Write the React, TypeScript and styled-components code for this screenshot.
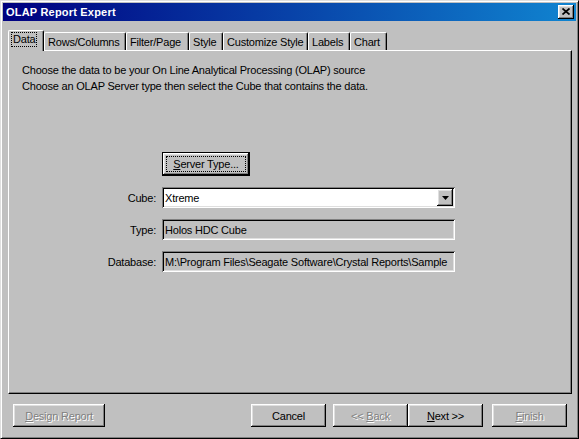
import React from "react";
import styled, { createGlobalStyle } from "styled-components";

const Global = createGlobalStyle`
  html, body { margin: 0; padding: 0; background: #c0c0c0; }
  body { font-family: "Liberation Sans", Arial, sans-serif; font-size: 11px; color: #000; letter-spacing: -0.2px; }
  * { box-sizing: border-box; }
`;

const raised = `
  box-shadow: inset -1px -1px #000, inset 1px 1px #fff, inset -2px -2px #808080, inset 2px 2px #dfdfdf;
`;
const sunken = `
  box-shadow: inset 1px 1px #808080, inset -1px -1px #fff, inset 2px 2px #000, inset -2px -2px #dfdfdf;
`;

const Window = styled.div`
  width: 579px;
  height: 439px;
  background: #c0c0c0;
  border: 1px solid;
  border-color: #dfdfdf #000 #000 #dfdfdf;
  box-shadow: inset 1px 1px #fff, inset -1px -1px #808080;
  padding: 2px;
  display: flex;
  flex-direction: column;
`;

const TitleBar = styled.div`
  height: 18px;
  background: linear-gradient(to right, #000080, #1084d0);
  display: flex;
  align-items: center;
  justify-content: space-between;
  padding: 0 2px 0 3px;
`;

const Title = styled.span`
  color: #fff;
  font-weight: bold;
  font-size: 11px;
  letter-spacing: 0.2px;
`;

const CloseButton = styled.div`
  width: 16px;
  height: 14px;
  background: #c0c0c0;
  ${raised}
  display: flex;
  align-items: center;
  justify-content: center;
  padding-bottom: 1px;
`;

const Body = styled.div`
  flex: 1;
  display: flex;
  flex-direction: column;
  padding: 9px 4px 0 5px;
`;

const TabStrip = styled.div`
  display: flex;
  align-items: flex-end;
  height: 20px;
  position: relative;
  z-index: 1;
`;

const Tab = styled.div<{ $w: number; $active?: boolean }>`
  width: ${(p) => p.$w}px;
  height: ${(p) => (p.$active ? 21 : 18)}px;
  margin-bottom: ${(p) => (p.$active ? -1 : 0)}px;
  background: #c0c0c0;
  border-top: 1px solid #fff;
  border-left: 1px solid #fff;
  border-right: 1px solid #000;
  border-radius: 2px 2px 0 0;
  box-shadow: inset -1px 0 #808080;
  display: flex;
  align-items: ${(p) => (p.$active ? "flex-start" : "center")};
  padding: ${(p) => (p.$active ? "2px 0 0 3px" : "0 0 0 3px")};
  white-space: nowrap;
`;

const FocusLabel = styled.span`
  outline: 1px dotted #000;
  padding: 0 1px;
  line-height: 13px;
`;

const Panel = styled.div`
  flex: 1;
  background: #c0c0c0;
  border-top: 1px solid #fff;
  border-left: 1px solid #fff;
  border-right: 1px solid #000;
  border-bottom: 1px solid #000;
  box-shadow: inset -1px -1px #808080;
  padding: 11px 13px;
`;

const Intro = styled.p`
  margin: 0;
  line-height: 16px;
`;

const Form = styled.div`
  margin-top: 58px;
  display: grid;
  grid-template-columns: 134px 293px;
  column-gap: 6px;
  row-gap: 11px;
  align-items: center;
`;

const Label = styled.span`
  text-align: right;
`;

const Button = styled.div<{ $w: number; $h?: number; $default?: boolean; $disabled?: boolean }>`
  width: ${(p) => p.$w}px;
  height: ${(p) => p.$h ?? 23}px;
  background: #c0c0c0;
  display: flex;
  align-items: center;
  justify-content: center;
  color: ${(p) => (p.$disabled ? "#808080" : "#000")};
  text-shadow: ${(p) => (p.$disabled ? "1px 1px 0 #fff" : "none")};
  ${(p) =>
    p.$default
      ? `border: 1px solid #000; box-shadow: inset -1px -1px #000, inset 1px 1px #fff, inset -2px -2px #808080, inset 2px 2px #dfdfdf;`
      : raised}
  white-space: pre;
`;

const Caption = styled.span`
  white-space: pre;
`;

const FocusRect = styled.span`
  flex: 1;
  align-self: stretch;
  margin: 3px;
  outline: 1px dotted #000;
  outline-offset: -1px;
  display: flex;
  align-items: center;
  justify-content: center;
`;

const Combo = styled.div`
  height: 21px;
  background: #fff;
  ${sunken}
  display: flex;
  align-items: center;
  padding: 2px;
`;

const ComboText = styled.span`
  flex: 1;
  padding-left: 1px;
`;

const DropButton = styled.div`
  width: 16px;
  height: 17px;
  background: #c0c0c0;
  ${raised}
  display: flex;
  align-items: center;
  justify-content: center;
`;

const Field = styled.div`
  height: 21px;
  background: #c0c0c0;
  ${sunken}
  display: flex;
  align-items: center;
  padding: 0 2px 0 3px;
  overflow: hidden;
  white-space: nowrap;
`;

const Footer = styled.div`
  height: 23px;
  margin: 10px 0 9px;
  display: flex;
  align-items: center;
  padding: 0 5px 0 5px;
`;

const Spacer = styled.div`
  flex: 1;
`;

const Gap = styled.div<{ $w: number }>`
  width: ${(p) => p.$w}px;
`;

const U = styled.span`
  text-decoration: underline;
  text-underline-offset: 1px;
`;

const tabs: { label: string; w: number }[] = [
  { label: "Rows/Columns", w: 82 },
  { label: "Filter/Page", w: 63 },
  { label: "Style", w: 34 },
  { label: "Customize Style", w: 85 },
  { label: "Labels", w: 42 },
  { label: "Chart", w: 37 },
];

export default function App() {
  return (
    <>
      <Global />
      <Window>
        <TitleBar>
          <Title>OLAP Report Expert</Title>
          <CloseButton>
            <svg width="8" height="7" viewBox="0 0 8 7">
              <path d="M0.5 0.5 L7.5 6.5 M7.5 0.5 L0.5 6.5" stroke="#000" strokeWidth="1.7" fill="none" />
            </svg>
          </CloseButton>
        </TitleBar>
        <Body>
          <TabStrip>
            <Tab $w={36} $active>
              <FocusLabel>Data</FocusLabel>
            </Tab>
            {tabs.map((t) => (
              <Tab key={t.label} $w={t.w}>
                {t.label}
              </Tab>
            ))}
          </TabStrip>
          <Panel>
            <Intro>
              Choose the data to be your On Line Analytical Processing (OLAP) source
              <br />
              Choose an OLAP Server type then select the Cube that contains the data.
            </Intro>
            <Form>
              <span />
              <Button $w={88} $h={24} $default>
                <FocusRect>
                  <Caption>
                    <U>S</U>erver Type...
                  </Caption>
                </FocusRect>
              </Button>
              <Label>Cube:</Label>
              <Combo>
                <ComboText>Xtreme</ComboText>
                <DropButton>
                  <svg width="7" height="4" viewBox="0 0 7 4">
                    <path d="M0 0 H7 L3.5 4 Z" fill="#000" />
                  </svg>
                </DropButton>
              </Combo>
              <Label>Type:</Label>
              <Field>Holos HDC Cube</Field>
              <Label>Database:</Label>
              <Field>M:\Program Files\Seagate Software\Crystal Reports\Sample</Field>
            </Form>
          </Panel>
          <Footer>
            <Button $w={92} $disabled>
              <Caption>
                <U>D</U>esign Report
              </Caption>
            </Button>
            <Spacer />
            <Button $w={75}>
              <Caption>Cancel</Caption>
            </Button>
            <Gap $w={7} />
            <Button $w={75} $disabled>
              <Caption>
                {"<< "}
                <U>B</U>ack
              </Caption>
            </Button>
            <Button $w={75}>
              <Caption>
                <U>N</U>
                {"ext >>"}
              </Caption>
            </Button>
            <Gap $w={9} />
            <Button $w={75} $disabled>
              <Caption>
                <U>F</U>inish
              </Caption>
            </Button>
          </Footer>
        </Body>
      </Window>
    </>
  );
}
